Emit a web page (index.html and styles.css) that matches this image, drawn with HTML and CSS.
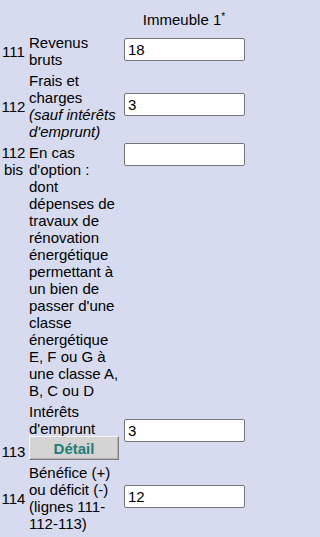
FILE: index.html
```html
<!DOCTYPE html>
<html lang="fr">
<head>
<meta charset="utf-8">
<title>Immeuble 1</title>
<link rel="stylesheet" href="styles.css">
</head>
<body>
<div class="form">
  <div class="blank"></div>
  <div class="blank"></div>
  <div class="head">Immeuble 1<sup>*</sup></div>

  <div class="num mid">111</div>
  <div class="label">Revenus bruts</div>
  <div class="field mid"><input class="inp" type="text" value="18"></div>

  <div class="num mid">112</div>
  <div class="label">Frais et charges<br><i>(sauf intérêts d'emprunt)</i></div>
  <div class="field mid"><input class="inp" type="text" value="3"></div>

  <div class="num top">112<br>bis</div>
  <div class="label">En cas d'option : dont dépenses de travaux de rénovation énergétique permettant à un bien de passer d'une classe énergétique E, F ou G à une classe A, B, C ou D</div>
  <div class="field top"><input class="inp inp-top" type="text" value=""></div>

  <div class="num bottom">113</div>
  <div class="label label-btn">Intérêts d'emprunt<button class="btn" type="button">Détail</button></div>
  <div class="field mid"><input class="inp" type="text" value="3"></div>

  <div class="num mid">114</div>
  <div class="label">Bénéfice (+) ou déficit (-) (lignes 111-<wbr>112-113)</div>
  <div class="field mid"><input class="inp" type="text" value="12"></div>
</div>
</body>
</html>
```

FILE: styles.css
```css
html, body {
  margin: 0;
  padding: 0;
  background: #d6dbf0;
}

body {
  font-family: "Liberation Sans", Arial, sans-serif;
  font-size: 15px;
  line-height: 17px;
  color: #000;
}

.form {
  display: grid;
  grid-template-columns: 25px 91px 121px;
  column-gap: 3px;
  row-gap: 4px;
  padding: 11px 1px 0 1px;
}

.form > div:nth-child(3n) {
  margin-left: 1px;
}

.head {
  height: 19px;
  text-align: center;
}

.head sup {
  font-size: 10px;
  line-height: 0;
  vertical-align: 5px;
}

.num {
  text-align: center;
}

.mid { align-self: center; }
.top { align-self: start; }
.bottom { align-self: end; }

.label {
  align-self: start;
}

.label i {
  font-style: italic;
}

.label-btn {
  display: flex;
  flex-direction: column;
  align-items: flex-start;
}

.btn {
  display: block;
  width: 90px;
  height: 24px;
  margin: -1px 0 0 0;
  padding: 0;
  background: #d4d4d4;
  border: 1px solid;
  border-color: #f6f6f6 #7c7c7c #7c7c7c #f6f6f6;
  box-shadow: inset -1px -1px 0 #b4b4b4;
  font-family: "Liberation Sans", Arial, sans-serif;
  font-size: 15px;
  font-weight: bold;
  line-height: 17px;
  color: #247d7a;
}

.field {
  display: flex;
}

.field.mid {
  margin-bottom: 3px;
}

.inp {
  box-sizing: border-box;
  width: 121px;
  height: 23px;
  margin: 0;
  padding: 1px 3px;
  border: 1px solid #767676;
  border-radius: 2px;
  background: #fff;
  font-family: "Liberation Sans", Arial, sans-serif;
  font-size: 15px;
  color: #000;
}

.inp-top {
  margin-top: -1px;
}
```
